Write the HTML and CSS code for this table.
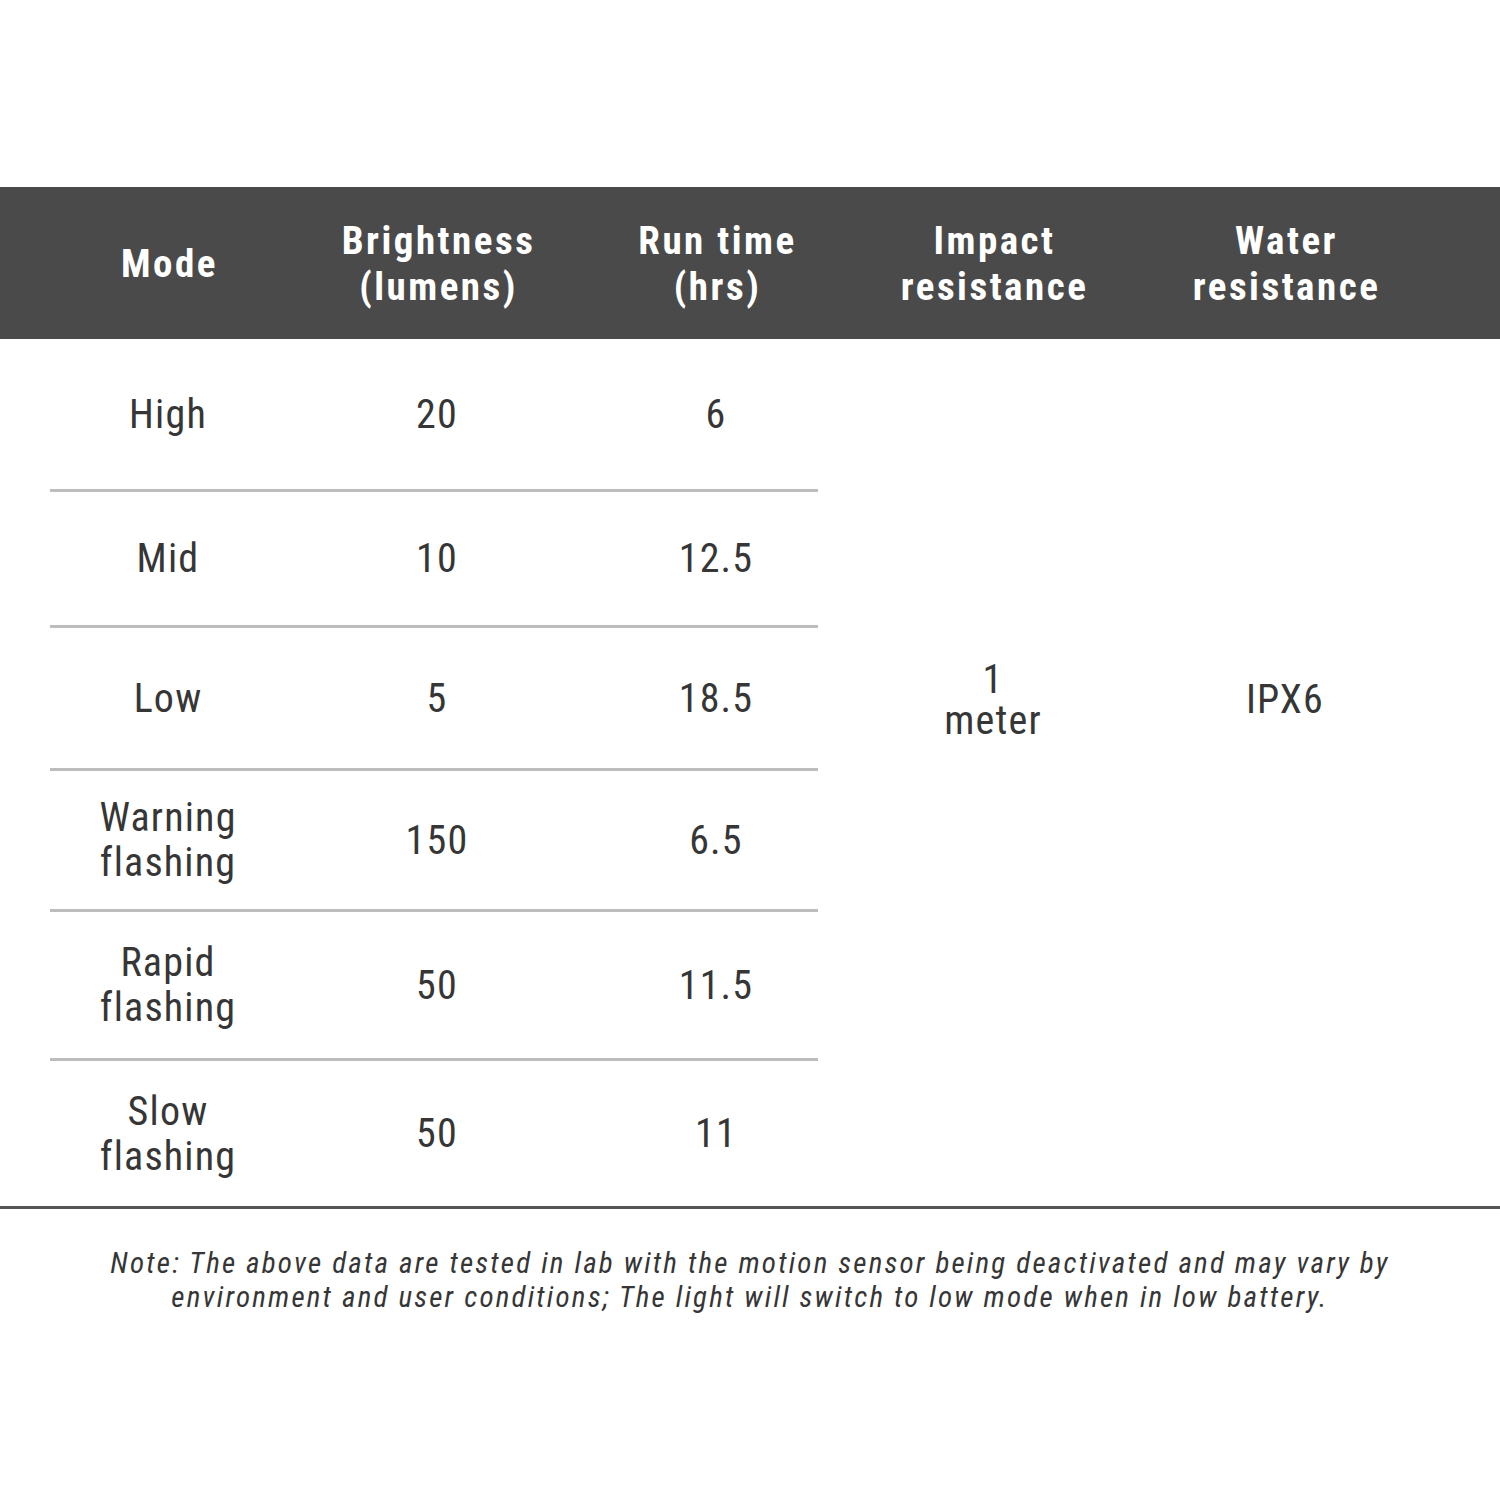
FILE: index.html
```html
<!DOCTYPE html>
<html lang="en">
<head>
<meta charset="utf-8">
<title>Spec table</title>
<link rel="stylesheet" href="styles.css">
</head>
<body>
<div class="sheet">
  <div class="head cols5">
    <div class="hc">Mode</div>
    <div class="hc">Brightness<br>(lumens)</div>
    <div class="hc">Run time<br>(hrs)</div>
    <div class="hc">Impact<br>resistance</div>
    <div class="hc">Water<br>resistance</div>
  </div>
  <div class="body">
    <div class="left">
      <div class="row r1 cols3"><div>High</div><div>20</div><div>6</div></div>
      <div class="sep"></div>
      <div class="row r2 cols3"><div>Mid</div><div>10</div><div>12.5</div></div>
      <div class="sep"></div>
      <div class="row r3 cols3"><div>Low</div><div>5</div><div>18.5</div></div>
      <div class="sep"></div>
      <div class="row r4 cols3"><div>Warning<br>flashing</div><div>150</div><div>6.5</div></div>
      <div class="sep"></div>
      <div class="row r5 cols3"><div>Rapid<br>flashing</div><div>50</div><div>11.5</div></div>
      <div class="sep"></div>
      <div class="row r6 cols3"><div>Slow<br>flashing</div><div>50</div><div>11</div></div>
    </div>
    <div class="right">
      <div class="rc tight">1<br>meter</div>
      <div class="rc">IPX6</div>
    </div>
  </div>
  <div class="rule"></div>
  <p class="note">Note: The above data are tested in lab with the motion sensor being deactivated and may vary by<br>environment and user conditions; The light will switch to low mode when in low battery.</p>
</div>
</body>
</html>
```

FILE: styles.css
```css
html, body {
  margin: 0;
  padding: 0;
  background: #ffffff;
}
body {
  width: 1500px;
  height: 1500px;
  font-family: "Roboto Condensed", "Liberation Sans Narrow", Roboto, "Noto Sans", sans-serif;
  color: #333333;
}
.sheet {
  padding-top: 187px;
}
.cols5 {
  display: grid;
  grid-template-columns: 336px 202px 356px 198px 386px;
}
.cols3 {
  display: grid;
  grid-template-columns: 336px 202px 356px;
}
.head {
  background: #4a4a4a;
  height: 152px;
  align-items: center;
  text-align: center;
  color: #ffffff;
  font-weight: 700;
  font-size: 39px;
  line-height: 46px;
  letter-spacing: 2.5px;
}
.hc {
  padding: 2px 0 0 3px;
}
.body {
  display: flex;
  align-items: flex-start;
}
.left {
  width: 894px;
}
.row {
  align-items: center;
  text-align: center;
  font-size: 40px;
  line-height: 45px;
  letter-spacing: 1.2px;
  color: #363636;
}
.r1 { height: 150px; }
.r2 { height: 133px; }
.r3 { height: 140px; }
.r4 { height: 138px; }
.r5 { height: 146px; }
.r6 { height: 145px; }
.sep {
  height: 3px;
  margin: 0 76px 0 50px;
  background: #bdbdbd;
}
.right {
  display: grid;
  grid-template-columns: 198px 386px;
  height: 721px;
  align-items: center;
  text-align: center;
  font-size: 40px;
  line-height: 45px;
  letter-spacing: 1.2px;
  color: #363636;
}
.tight {
  line-height: 41px;
}
.rule {
  height: 3px;
  background: #555555;
}
.note {
  margin: 37px 0 0;
  text-align: center;
  font-style: italic;
  font-size: 29px;
  line-height: 34px;
  letter-spacing: 2.2px;
  color: #363636;
}
```
